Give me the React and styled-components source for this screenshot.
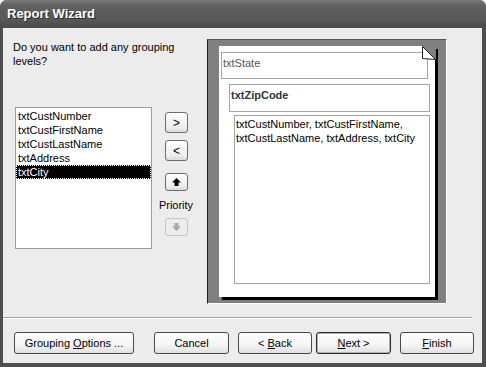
import React from "react";
import styled, { createGlobalStyle } from "styled-components";

const GlobalStyle = createGlobalStyle`
  html, body {
    margin: 0;
    padding: 0;
    background: #ececec;
  }
  body {
    font-family: "Liberation Sans", Arial, sans-serif;
    font-size: 11px;
    color: #000;
  }
`;

const fields = ["txtCustNumber", "txtCustFirstName", "txtCustLastName", "txtAddress", "txtCity"];

const App = () => {
  return (
    <>
      <GlobalStyle />
      <Window>
        <TitleBar>Report Wizard</TitleBar>
        <Body>
          <Main>
            <LeftColumn>
              <Question>
                Do you want to add any grouping
                <br />
                levels?
              </Question>
              <Picker>
                <FieldList>
                  {fields.map((f) => (
                    <FieldItem key={f} selected={f === "txtCity"}>
                      {f}
                    </FieldItem>
                  ))}
                </FieldList>
                <ArrowColumn>
                  <SmallButton>&gt;</SmallButton>
                  <SmallButton $top={7}>&lt;</SmallButton>
                  <SmallButton $top={12} $h={18}>
                    <Arrow up />
                  </SmallButton>
                  <PriorityLabel>Priority</PriorityLabel>
                  <SmallButton $top={6} $h={18} disabled>
                    <Arrow disabled />
                  </SmallButton>
                </ArrowColumn>
              </Picker>
            </LeftColumn>
            <Preview>
              <Page>
                <DogEar width="16" height="15" viewBox="0 0 16 15">
                  <polygon points="2,0 16,0 16,14" fill="#808080" />
                  <polygon points="2.5,0.5 2.5,12.5 15.5,13.5" fill="#fff" stroke="#202020" strokeWidth="1" />
                </DogEar>
                <GroupBox $indent={2} $right={7} $h={27}>
                  <GroupText>txtState</GroupText>
                </GroupBox>
                <GroupBox $indent={10} $right={5} $h={28} $gap={5}>
                  <GroupText bold>txtZipCode</GroupText>
                </GroupBox>
                <DetailBox>
                  txtCustNumber, txtCustFirstName,
                  <br />
                  txtCustLastName, txtAddress, txtCity
                </DetailBox>
              </Page>
            </Preview>
          </Main>
          <Separator />
          <ButtonRow>
            <WizardButton $w={120}>
              Grouping{" "}<u>O</u>ptions ...
            </WizardButton>
            <WizardButton $w={75} $left={20}>
              Cancel
            </WizardButton>
            <WizardButton $w={74} $left={9}>
              &lt;{" "}<u>B</u>ack
            </WizardButton>
            <WizardButton $w={75} $left={4} isDefault>
              <u>N</u>ext &gt;
            </WizardButton>
            <WizardButton $w={74} $left={9}>
              <u>F</u>inish
            </WizardButton>
          </ButtonRow>
        </Body>
      </Window>
    </>
  );
};

const Arrow = ({ up, disabled }) => (
  <svg width="9" height="8" viewBox="0 0 9 8">
    {up ? (
      <polygon points="4.5,0 9,4.5 6.5,4.5 6.5,8 2.5,8 2.5,4.5 0,4.5" fill="#000" />
    ) : (
      <polygon
        points="2.5,0 6.5,0 6.5,3.5 9,3.5 4.5,8 0,3.5 2.5,3.5"
        fill={disabled ? "#a8a8a8" : "#000"}
      />
    )}
  </svg>
);

const Window = styled.div`
  width: 486px;
  height: 367px;
  box-sizing: border-box;
  display: flex;
  flex-direction: column;
  background: #4e4e4e;
  border-radius: 7px 7px 0 0;
  overflow: hidden;
`;

const TitleBar = styled.div`
  height: 28px;
  flex-shrink: 0;
  display: flex;
  align-items: center;
  padding-left: 7px;
  padding-bottom: 1px;
  box-sizing: border-box;
  background: linear-gradient(#7a7a7a 0%, #606060 20%, #585858 70%, #4a4a4a 100%);
  color: #fff;
  font-weight: bold;
  font-size: 13px;
  text-shadow: 1px 1px 0 #2a2a2a;
`;

const Body = styled.div`
  flex: 1;
  margin: 0 4px 4px 3px;
  background: #ececec;
  display: flex;
  flex-direction: column;
`;

const Main = styled.div`
  display: flex;
  padding-top: 11px;
`;

const LeftColumn = styled.div`
  width: 204px;
  padding-left: 10px;
  box-sizing: border-box;
`;

const Question = styled.div`
  line-height: 14px;
  padding-top: 1px;
`;

const Picker = styled.div`
  display: flex;
  margin-top: 39px;
  margin-left: 2px;
`;

const FieldList = styled.div`
  width: 137px;
  height: 142px;
  box-sizing: border-box;
  background: #fff;
  border: 1px solid #9c9c9c;
  padding-top: 1px;
`;

const FieldItem = styled.div`
  height: 14px;
  line-height: 14px;
  padding-left: 2px;
  white-space: nowrap;
  box-sizing: border-box;
  background: ${(p) => (p.selected ? "#000" : "transparent")};
  color: ${(p) => (p.selected ? "#fff" : "#000")};
  outline: ${(p) => (p.selected ? "1px dotted #fff" : "none")};
  outline-offset: -1px;
`;

const ArrowColumn = styled.div`
  display: flex;
  flex-direction: column;
  align-items: center;
  width: 36px;
  margin-left: 6px;
  padding-top: 5px;
`;

const SmallButton = styled.div`
  width: 23px;
  height: ${(p) => p.$h || 21}px;
  margin-top: ${(p) => p.$top || 0}px;
  margin-left: 1px;
  box-sizing: border-box;
  border: 1px solid ${(p) => (p.disabled ? "#c4c4c4" : "#6e6e6e")};
  border-radius: 3px;
  background: ${(p) => (p.disabled ? "#ececec" : "linear-gradient(#fff, #ececec 80%, #d8d8d8)")};
  display: flex;
  align-items: center;
  justify-content: center;
  font-size: 12px;
  line-height: 1;
`;

const PriorityLabel = styled.div`
  margin-top: 7px;
  line-height: 14px;
  font-size: 11px;
`;

const Preview = styled.div`
  width: 240px;
  height: 265px;
  box-sizing: border-box;
  background: #808080;
  border-top: 1px solid #555;
  border-left: 1px solid #202020;
  border-right: 1px solid #fff;
  border-bottom: 1px solid #fff;
  padding: 6px 0 0 11px;
`;

const Page = styled.div`
  position: relative;
  width: 216px;
  height: 251px;
  background: #fff;
  box-shadow: 3px 3px 0 #000;
  display: flex;
  flex-direction: column;
  padding-top: 6px;
  box-sizing: border-box;
`;

const DogEar = styled.svg`
  position: absolute;
  top: 0;
  right: -1px;
`;

const GroupBox = styled.div`
  height: ${(p) => p.$h}px;
  margin-left: ${(p) => p.$indent}px;
  margin-right: ${(p) => p.$right}px;
  margin-top: ${(p) => p.$gap || 0}px;
  box-sizing: border-box;
  border: 1px solid #a4a4a4;
  padding: 3px 1px;
`;

const GroupText = styled.div`
  line-height: 14px;
  font-weight: ${(p) => (p.bold ? "bold" : "normal")};
  color: ${(p) => (p.bold ? "#333" : "#555")};
`;

const DetailBox = styled.div`
  height: 169px;
  margin: 3px 5px 0 15px;
  box-sizing: border-box;
  border: 1px solid #a4a4a4;
  padding: 1px 1px;
  line-height: 14px;
`;

const Separator = styled.div`
  margin-top: 13px;
  margin-right: 10px;
  height: 0;
  border-top: 1px solid #a4a4a4;
  border-bottom: 1px solid #fff;
`;

const ButtonRow = styled.div`
  display: flex;
  padding-left: 11px;
  margin-top: 13px;
`;

const WizardButton = styled.div`
  width: ${(p) => p.$w}px;
  height: 22px;
  margin-left: ${(p) => p.$left || 0}px;
  box-sizing: border-box;
  border: 1px solid ${(p) => (p.isDefault ? "#2a2a2a" : "#4a4a4a")};
  border-radius: 3px;
  box-shadow: ${(p) => (p.isDefault ? "inset 0 0 0 1px #b0b0b0" : "none")};
  background: linear-gradient(#fff, #f4f4f4 60%, #e0e0e0);
  display: flex;
  align-items: center;
  justify-content: center;
  white-space: pre;
  font-size: 11px;

  u {
    text-decoration: underline;
    text-underline-offset: 1px;
  }
`;

export default App;
